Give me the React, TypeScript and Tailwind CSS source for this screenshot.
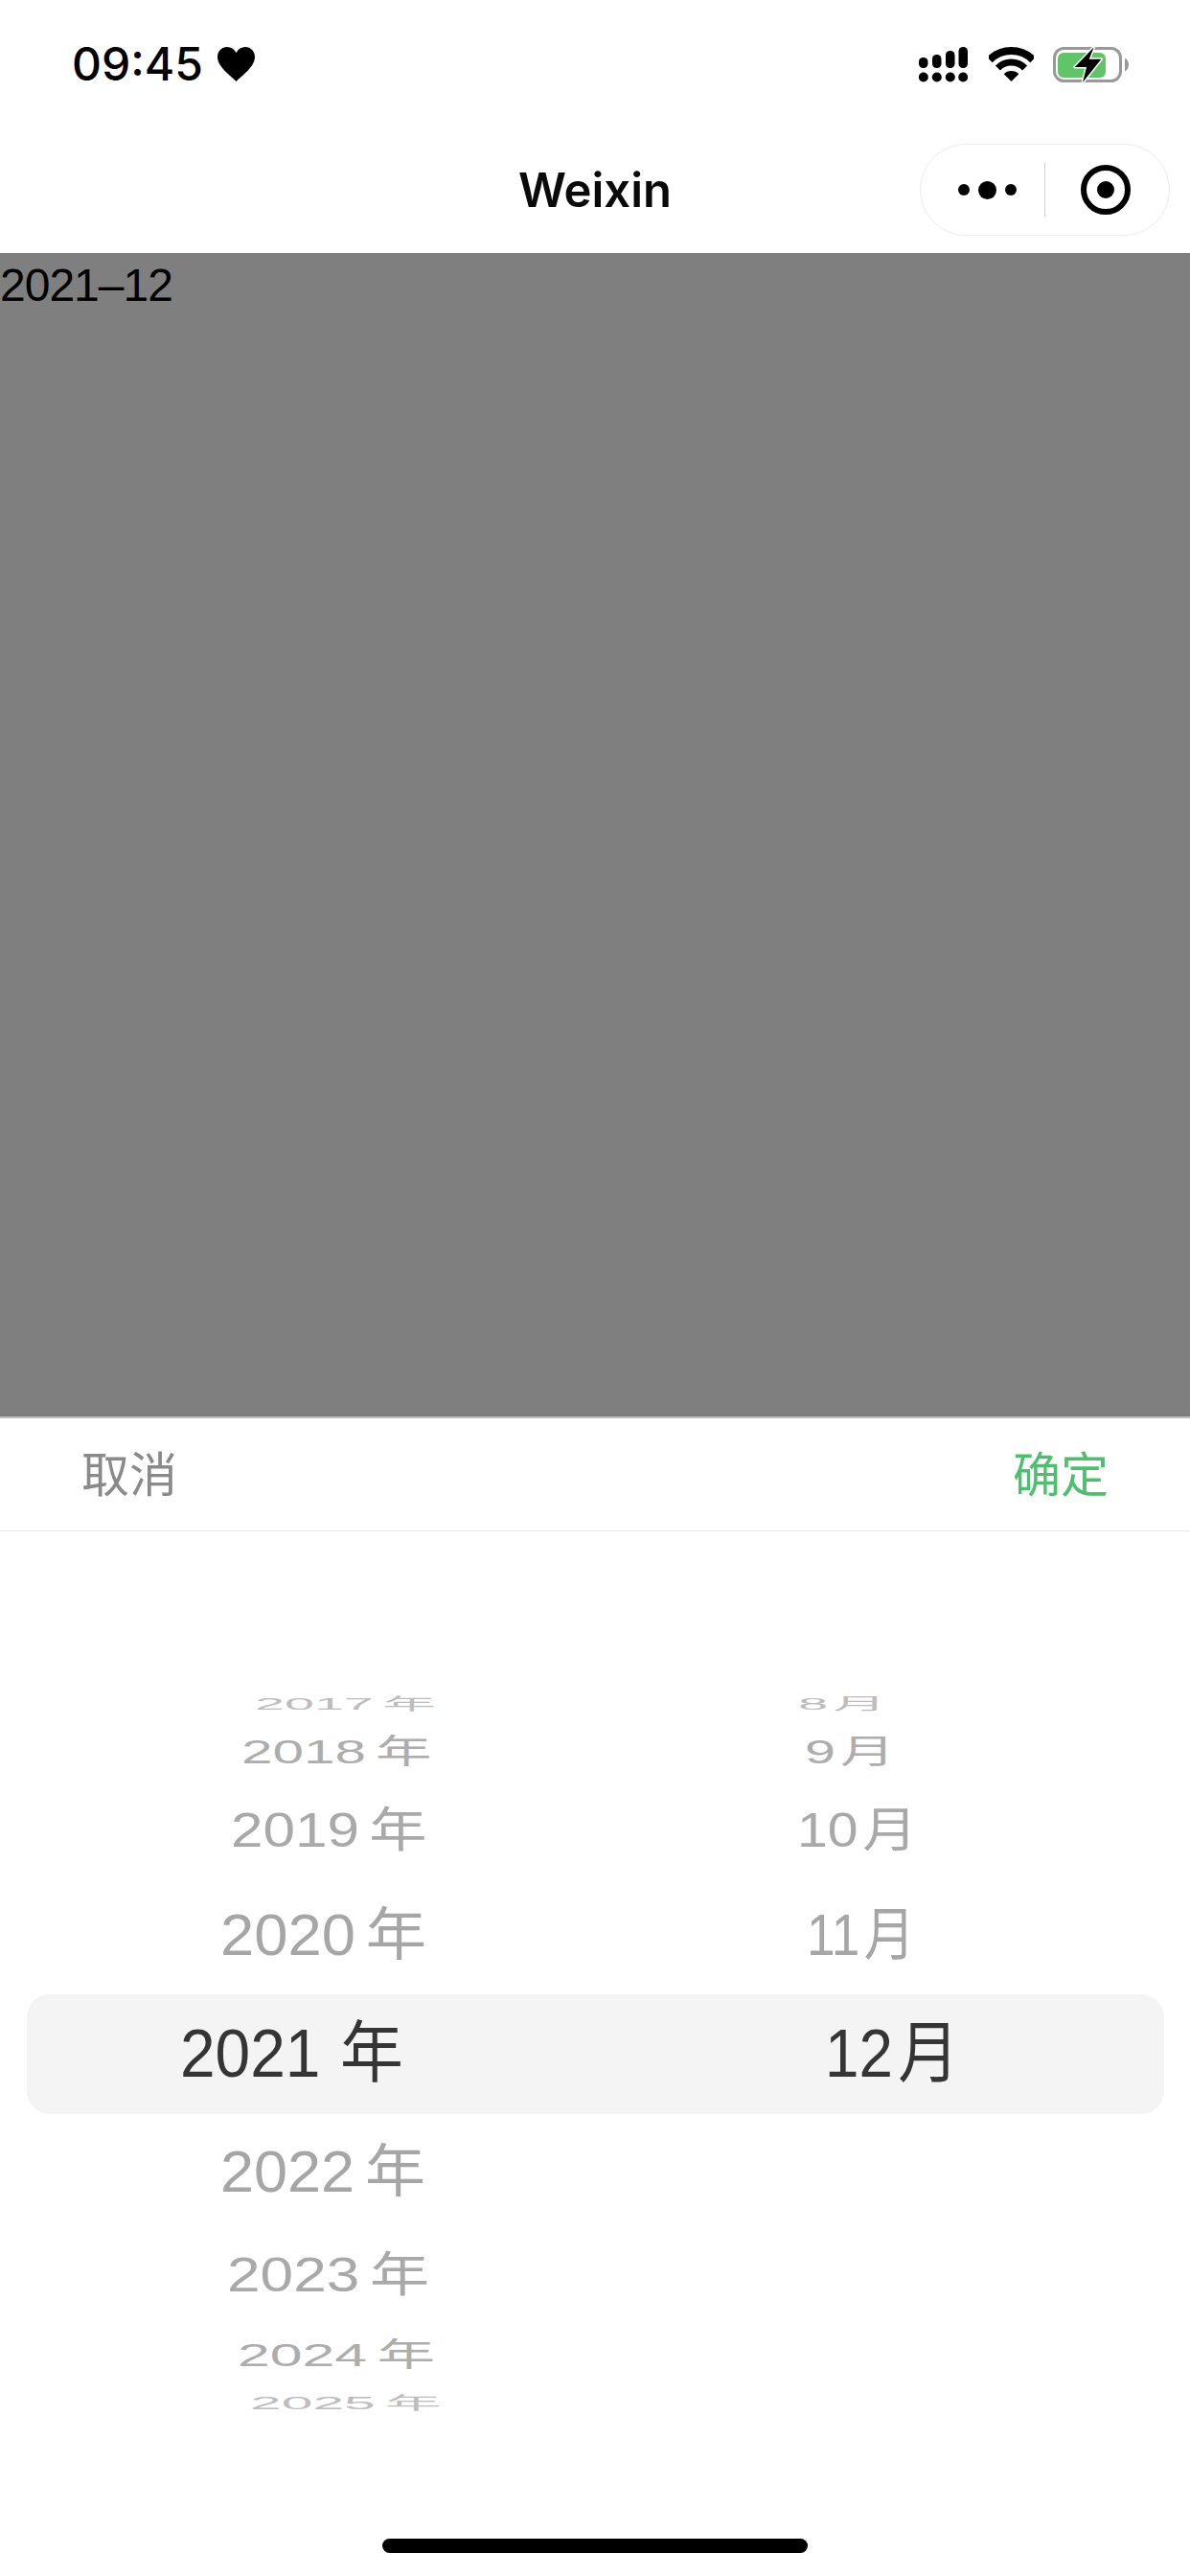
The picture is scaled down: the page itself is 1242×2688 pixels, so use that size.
const years = [
  { num: '2017', unit: '年', g: 'ml-[12px]', h: 'h-[30px]', ml: 'ml-[266px]', t: 'scale-x-[0.795] scale-y-[0.24]', c: 'text-[#bdbdbd]' },
  { num: '2018', unit: '年', g: 'ml-[12px]', h: 'h-[70px]', ml: 'ml-[252px]', t: 'scale-x-[0.835] scale-y-[0.5]', c: 'text-[#adadad]' },
  { num: '2019', unit: '年', g: 'ml-[12px]', h: 'h-[94px]', ml: 'ml-[241px]', t: 'scale-x-[0.86] scale-y-[0.72]', c: 'text-[#a9a9a9]' },
  { num: '2020', unit: '年', g: 'ml-[12px]', h: 'h-[124px]', ml: 'ml-[230px]', t: 'scale-x-[0.905] scale-y-[0.86]', c: 'text-[#a6a6a6]' },
  { num: '2021', unit: '年', g: 'ml-[22px]', h: 'h-[124px]', ml: 'ml-[188px]', t: 'scale-x-[0.94] scale-y-[1]', c: 'text-[#353535]' },
  { num: '2022', unit: '年', g: 'ml-[12px]', h: 'h-[122px]', ml: 'ml-[230px]', t: 'scale-x-[0.9] scale-y-[0.86]', c: 'text-[#a6a6a6]' },
  { num: '2023', unit: '年', g: 'ml-[12px]', h: 'h-[94px]', ml: 'ml-[237px]', t: 'scale-x-[0.888] scale-y-[0.72]', c: 'text-[#a9a9a9]' },
  { num: '2024', unit: '年', g: 'ml-[12px]', h: 'h-[72px]', ml: 'ml-[248px]', t: 'scale-x-[0.867] scale-y-[0.48]', c: 'text-[#adadad]' },
  { num: '2025', unit: '年', g: 'ml-[12px]', h: 'h-[30px]', ml: 'ml-[261px]', t: 'scale-x-[0.84] scale-y-[0.26]', c: 'text-[#bdbdbd]' },
];

const months = [
  { num: '8', unit: '月', g: 'ml-[6px]', h: 'h-[30px]', ml: 'ml-[212px]', t: 'scale-x-[0.8] scale-y-[0.24]', c: 'text-[#bdbdbd]' },
  { num: '9', unit: '月', g: 'ml-[6px]', h: 'h-[70px]', ml: 'ml-[219px]', t: 'scale-x-[0.82] scale-y-[0.5]', c: 'text-[#adadad]' },
  { num: '10', unit: '月', g: 'ml-[6px]', h: 'h-[94px]', ml: 'ml-[211px]', t: 'scale-x-[0.815] scale-y-[0.72]', c: 'text-[#a9a9a9]' },
  { num: '11', unit: '月', g: 'ml-[6px]', h: 'h-[124px]', ml: 'ml-[221px]', t: 'scale-x-[0.76] scale-y-[0.86]', c: 'text-[#a6a6a6]' },
  { num: '12', unit: '月', g: 'ml-[6px]', h: 'h-[124px]', ml: 'ml-[240px]', t: 'scale-x-[0.91] scale-y-[1]', c: 'text-[#353535]' },
];

function Wheel({ items }: { items: typeof years }) {
  return (
    <div className="flex flex-col">
      {items.map((item) => (
        <div key={item.num} className={`flex items-center ${item.h}`}>
          <span className={`origin-left whitespace-nowrap text-[70px] leading-none ${item.ml} ${item.t} ${item.c}`}>
            {item.num}
            <span className={item.g}>{item.unit}</span>
          </span>
        </div>
      ))}
    </div>
  );
}

function StatusBar() {
  return (
    <div className="flex h-[132px] items-center justify-between pl-[75px] pr-[63px] pt-[2px] text-black">
      <div className="flex items-center gap-[15px]">
        <span className="font-['Inter',sans-serif] text-[48px] font-medium leading-none">09:45</span>
        <svg width="39" height="36" viewBox="0 0 39 36" fill="black">
          <path d="M19.5 36C14 30 0 21 0 10.5 0 4.5 4.5 0 10 0c4 0 7.5 2 9.5 6 2-4 5.500-6 9.500-6 5.500 0 10 4.500 10 10.500C39 21 25 30 19.500 36Z" />
        </svg>
      </div>
      <div className="flex items-center">
        <svg width="51" height="37" viewBox="0 0 51 37" fill="black">
          <rect x="0" y="11" width="9.500" height="11" rx="4.500" />
          <rect x="14" y="8" width="9.500" height="14" rx="4.500" />
          <rect x="28" y="4" width="9.500" height="18" rx="4.500" />
          <rect x="41.500" y="0" width="9.500" height="22" rx="4.500" />
          <circle cx="4.800" cy="31.500" r="5" />
          <circle cx="18.800" cy="31.500" r="5" />
          <circle cx="32.800" cy="31.500" r="5" />
          <circle cx="46.200" cy="31.500" r="5" />
        </svg>
        <svg className="ml-[22px]" width="47" height="36" viewBox="0 0 47 36" fill="none" stroke="black">
          <path d="M0.900 13.400A32 32 0 0 1 46.100 13.400" strokeWidth="8" />
          <path d="M9.400 21.900A20 20 0 0 1 37.600 21.900" strokeWidth="7" />
          <path d="M23.500 36L15.700 28.200A11 11 0 0 1 31.300 28.200Z" fill="black" stroke="none" />
        </svg>
        <svg className="ml-[20px]" width="80" height="39" viewBox="0 0 80 39">
          <rect x="1.500" y="2.500" width="69" height="34" rx="10" fill="white" stroke="#999999" strokeWidth="3" />
          <rect x="5" y="7" width="50" height="26" rx="6" fill="#61c466" />
          <path d="M75 12.500C78 14 79 17 79 19.500 79 22 78 25 75 26.500Z" fill="#999999" />
          <polygon
            points="42.700,1.300 22.700,22 35,22 31,38 50.300,13.700 37.700,13.700"
            fill="black"
            stroke="white"
            strokeWidth="3"
            strokeLinejoin="round"
            paintOrder="stroke"
          />
        </svg>
      </div>
    </div>
  );
}

function NavBar() {
  return (
    <div className="grid h-[132px] grid-cols-[1fr_auto_1fr] items-center">
      <div />
      <div className="font-['Inter',sans-serif] text-[49px] font-semibold leading-none text-[#0a0a0a]">Weixin</div>
      <div className="mr-[21px] flex h-[96px] w-[261px] items-center justify-self-end rounded-full border border-[#ececec] bg-white">
        <div className="flex w-[129px] items-center justify-center gap-[9px] pl-[9px]">
          <span className="h-[12px] w-[12px] rounded-full bg-black" />
          <span className="h-[19px] w-[19px] rounded-full bg-black" />
          <span className="h-[12px] w-[12px] rounded-full bg-black" />
        </div>
        <div className="h-[56px] w-px bg-[#cfcfcf]" />
        <div className="flex flex-1 items-center justify-center pr-[3px]">
          <div className="flex h-[52px] w-[52px] items-center justify-center rounded-full border-[6px] border-black">
            <span className="h-[18px] w-[18px] rounded-full bg-black" />
          </div>
        </div>
      </div>
    </div>
  );
}

export default function App() {
  return (
    <div className="h-[2688px] w-[1242px] overflow-hidden bg-white font-['Liberation_Sans','Noto_Sans_CJK_SC',sans-serif]">
      <StatusBar />
      <NavBar />
      <div className="h-[1216px] border-b-2 border-[#bcbcbc] bg-[#7f7f7f] text-[48px] leading-[68px] tracking-[-1px] text-black">
        2021–12
      </div>
      <div className="flex h-[118px] items-center justify-between border-b border-[#e5e5e5] px-[85px] pt-[2px] text-[50px] leading-none">
        <span className="text-[#8a8a8a]">取消</span>
        <span className="text-[#4fbe6f]">确定</span>
      </div>
      <div className="relative h-[1090px]">
        <div className="absolute left-[28px] right-[27px] top-[483px] h-[125px] rounded-[24px] bg-[#f4f4f4]" />
        <div className="relative grid grid-cols-2 pt-[165px]">
          <Wheel items={years} />
          <Wheel items={months} />
        </div>
        <div className="absolute bottom-[24px] left-[399px] h-[15px] w-[444px] rounded-full bg-black" />
      </div>
    </div>
  );
}
